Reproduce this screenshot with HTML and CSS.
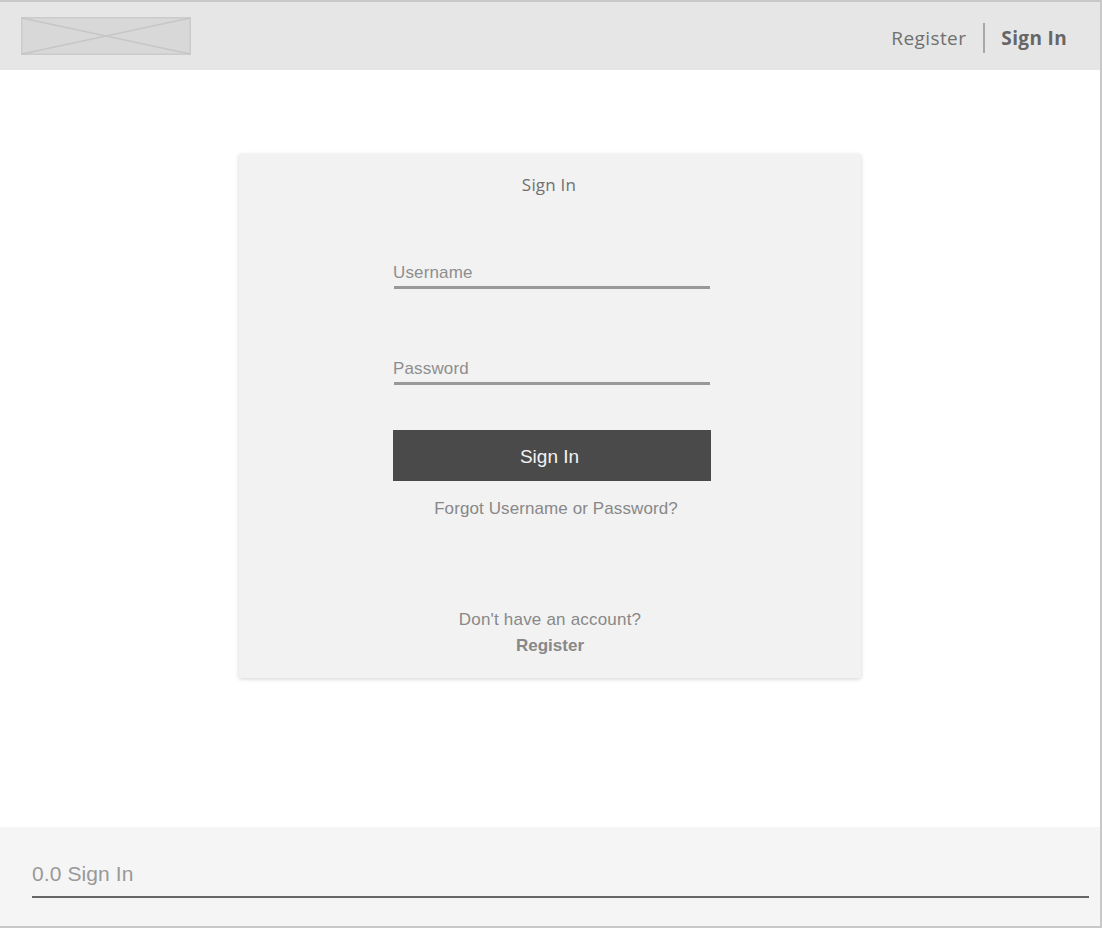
FILE: index.html
```
<!DOCTYPE html>
<html lang="en">
<head>
<meta charset="utf-8">
<title>Sign In</title>
<link rel="stylesheet" href="styles.css">
</head>
<body>
<div class="page">
  <header class="topbar">
    <svg class="logo" width="170" height="38" viewBox="0 0 170 38">
      <rect x="0.75" y="0.75" width="168.5" height="36.5" fill="#d8d8d8" stroke="#cbcbcb" stroke-width="1.5"/>
      <path d="M1 1L169 37M169 1L1 37" stroke="#c6c6c6" stroke-width="1.5" fill="none"/>
    </svg>
    <nav class="topnav">
      <a class="nav-link">Register</a>
      <span class="nav-sep"></span>
      <a class="nav-link nav-strong">Sign In</a>
    </nav>
  </header>
  <main class="content">
    <section class="card">
      <h1 class="card-title">Sign In</h1>
      <div class="field field-first"><span>Username</span></div>
      <div class="field field-second"><span>Password</span></div>
      <button class="btn">Sign In</button>
      <a class="forgot">Forgot Username or Password?</a>
      <p class="no-account">Don't have an account?</p>
      <a class="register">Register</a>
    </section>
  </main>
  <footer class="footer">
    <div class="footer-title">0.0 Sign In</div>
  </footer>
</div>
</body>
</html>
```
FILE: styles.css
```
* { box-sizing: border-box; }
html, body { margin: 0; height: 100%; }
body { font-family: "Liberation Sans", Arial, sans-serif; background: #fff; }
.page {
  width: 1102px; height: 928px; display: flex; flex-direction: column;
  border-top: 2px solid #c8c8c8; border-right: 2px solid #c8c8c8; border-bottom: 2px solid #c8c8c8;
  overflow: hidden;
}
.topbar {
  height: 68px; flex: none; background: #e6e6e6; display: flex;
  align-items: center; justify-content: space-between; padding: 0 33px 0 21px;
}
.logo { display: block; }
.topnav { display: flex; align-items: center; margin-top: 4px; font-family: "Open Sans", sans-serif; font-size: 19px; color: #707070; }
.nav-link { letter-spacing: 0.4px; }
.nav-sep { width: 2px; height: 30px; background: #a8a8a8; margin: 0 16px 0 17px; }
.nav-strong { font-weight: 700; color: #666; letter-spacing: 0.35px; }
.content { flex: 1; display: flex; justify-content: center; padding-top: 84px; }
.card {
  width: 622px; height: 524px; background: #f2f2f2; border-radius: 2px;
  box-shadow: 0 1px 4px rgba(0,0,0,0.18); display: flex; flex-direction: column;
  align-items: center;
}
.card-title { margin: 20px 0 0 -2px; font: 400 17px/22px "Open Sans", sans-serif; letter-spacing: 0.2px; color: #707070; }
.field {
  width: 316px; height: 28px; margin-left: 4px; padding-top: 1px; border-bottom: 3px solid #999;
  font-size: 17px; line-height: 22px; letter-spacing: 0.15px; color: #8e8e8e;
}
.field span { display: block; margin-left: -1px; }
.field-first { margin-top: 65px; }
.field-second { margin-top: 68px; }
.btn {
  width: 318px; height: 51px; margin: 45px 0 0 4px; padding: 2px 5px 0 0; background: #4a4a4a; color: #f2f2f2;
  border: 0; font: 400 19px "Liberation Sans", sans-serif;
}
.forgot { margin: 17px 0 0 12px; font-size: 17px; line-height: 22px; letter-spacing: 0.1px; color: #888; }
.no-account { margin: 89px 0 0 0; font-size: 17px; line-height: 22px; letter-spacing: 0.2px; color: #888; }
.register { margin-top: 4px; font-size: 17px; line-height: 22px; font-weight: 700; color: #888; }
.footer { height: 99px; flex: none; background: #f5f5f5; padding: 0 11px 0 32px; }
.footer-title {
  height: 71px; border-bottom: 2px solid #666; padding-top: 34px; font-size: 21px; line-height: 26px; letter-spacing: 0.1px; color: #999;
}
```
